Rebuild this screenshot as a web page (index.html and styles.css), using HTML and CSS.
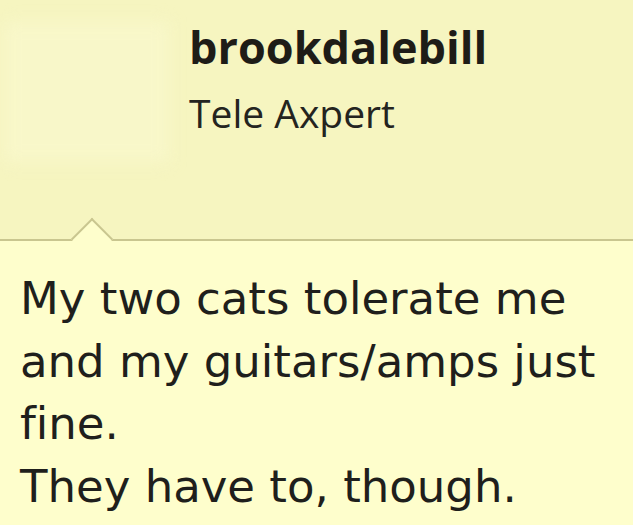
FILE: index.html
```html
<!doctype html>
<html lang="en">
<head>
    <meta charset="UTF-8">
    <title>brookdalebill</title>
    <link rel="stylesheet" href="styles.css">
</head>
<body>
<div class="post">
    <div class="post-header">
        <div class="avatar"></div>
        <div class="user-info">
            <div class="username">brookdalebill</div>
            <div class="user-title">Tele Axpert</div>
        </div>
    </div>
    <div class="post-body">
        <p class="message">My two cats tolerate me and my guitars/amps just fine.<br>They have to, though.</p>
    </div>
</div>
</body>
</html>
```

FILE: styles.css
```css
html, body {
    margin: 0;
    padding: 0;
    background-color: #fefecc;
}

.post {
    width: 633px;
}

/* Header with user name and title */
.post-header {
    position: relative;
    display: flex;
    height: 239px;
    background-color: #f6f5c0;
    border-bottom: 2px solid #c9c68f;
}

/* faded avatar, barely visible */
.avatar {
    width: 165px;
    height: 140px;
    margin-top: 22px;
    margin-left: 4px;
    background-color: #f8f7c9;
    filter: blur(8px);
}

.user-info {
    padding-left: 20px;
    padding-top: 20px;
    font-family: "Open Sans", sans-serif;
    color: #1e1c17;
}

.username {
    font-size: 45px;
    font-weight: bold;
    line-height: 54px;
}

.user-title {
    font-size: 39px;
    line-height: 54px;
    margin-top: 12px;
    color: #24241f;
}

/* Little arrow pointing up to the user */
.post-header::after {
    content: "";
    position: absolute;
    left: 77px;
    bottom: -15px;
    width: 28px;
    height: 28px;
    background-color: #fefecc;
    border-top: 2px solid #c9c68f;
    border-left: 2px solid #c9c68f;
    transform: rotate(45deg);
}

.post-body {
    padding: 27px 20px 0 20px;
}

.message {
    margin: 0;
    font-family: "DejaVu Sans", Verdana, sans-serif;
    font-size: 45px;
    line-height: 62.5px;
    font-variant-ligatures: none;
    color: #1f1f1c;
}
```
